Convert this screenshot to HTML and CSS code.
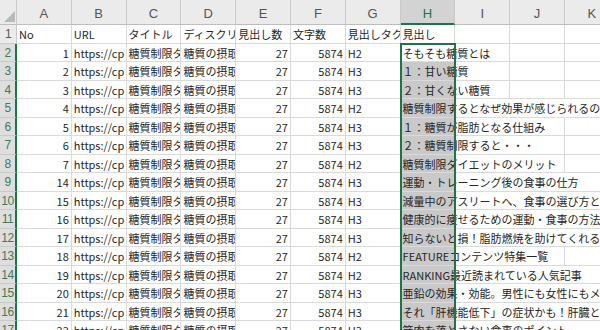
FILE: index.html
```html
<!DOCTYPE html>
<html lang="ja">
<head>
    <meta charset="utf-8">
    <link rel="stylesheet" href="styles.css">
</head>
<body>
    <div class="sheet">
        <div class="selection"></div>

        <div class="corner"><svg width="17" height="25" viewBox="0 0 17 25"><polygon points="4,22 15,22 15,11" fill="#b9b9b9"/></svg></div>
        <div class="col-head">A</div>
        <div class="col-head">B</div>
        <div class="col-head">C</div>
        <div class="col-head">D</div>
        <div class="col-head">E</div>
        <div class="col-head">F</div>
        <div class="col-head">G</div>
        <div class="col-head active">H</div>
        <div class="col-head">I</div>
        <div class="col-head">J</div>
        <div class="col-head">K</div>

        <div class="row-head">1</div>
        <div class="cell">No</div>
        <div class="cell">URL</div>
        <div class="cell">タイトル</div>
        <div class="cell">ディスクリ</div>
        <div class="cell">見出し数</div>
        <div class="cell">文字数</div>
        <div class="cell">見出しタク</div>
        <div class="cell">見出し</div>
        <div class="cell"></div>
        <div class="cell"></div>
        <div class="cell"></div>

        <div class="row-head sel">2</div>
        <div class="cell num">1</div>
        <div class="cell">https://cp</div>
        <div class="cell">糖質制限タ</div>
        <div class="cell">糖質の摂取</div>
        <div class="cell num">27</div>
        <div class="cell num">5874</div>
        <div class="cell">H2</div>
        <div class="cell span-2">そもそも糖質とは</div>
        <div class="cell"></div>
        <div class="cell"></div>

        <div class="row-head sel">3</div>
        <div class="cell num">2</div>
        <div class="cell">https://cp</div>
        <div class="cell">糖質制限タ</div>
        <div class="cell">糖質の摂取</div>
        <div class="cell num">27</div>
        <div class="cell num">5874</div>
        <div class="cell">H3</div>
        <div class="cell span-2 marked">１：甘い糖質</div>
        <div class="cell"></div>
        <div class="cell"></div>

        <div class="row-head sel">4</div>
        <div class="cell num">3</div>
        <div class="cell">https://cp</div>
        <div class="cell">糖質制限タ</div>
        <div class="cell">糖質の摂取</div>
        <div class="cell num">27</div>
        <div class="cell num">5874</div>
        <div class="cell">H3</div>
        <div class="cell span-2 marked">２：甘くない糖質</div>
        <div class="cell"></div>
        <div class="cell"></div>

        <div class="row-head sel">5</div>
        <div class="cell num">4</div>
        <div class="cell">https://cp</div>
        <div class="cell">糖質制限タ</div>
        <div class="cell">糖質の摂取</div>
        <div class="cell num">27</div>
        <div class="cell num">5874</div>
        <div class="cell">H2</div>
        <div class="cell span-4 marked">糖質制限するとなぜ効果が感じられるの</div>

        <div class="row-head sel">6</div>
        <div class="cell num">5</div>
        <div class="cell">https://cp</div>
        <div class="cell">糖質制限タ</div>
        <div class="cell">糖質の摂取</div>
        <div class="cell num">27</div>
        <div class="cell num">5874</div>
        <div class="cell">H3</div>
        <div class="cell span-3 marked">１：糖質が脂肪となる仕組み</div>
        <div class="cell"></div>

        <div class="row-head sel">7</div>
        <div class="cell num">6</div>
        <div class="cell">https://cp</div>
        <div class="cell">糖質制限タ</div>
        <div class="cell">糖質の摂取</div>
        <div class="cell num">27</div>
        <div class="cell num">5874</div>
        <div class="cell">H3</div>
        <div class="cell span-3 marked">２：糖質制限すると・・・</div>
        <div class="cell"></div>

        <div class="row-head sel">8</div>
        <div class="cell num">7</div>
        <div class="cell">https://cp</div>
        <div class="cell">糖質制限タ</div>
        <div class="cell">糖質の摂取</div>
        <div class="cell num">27</div>
        <div class="cell num">5874</div>
        <div class="cell">H2</div>
        <div class="cell span-3 marked">糖質制限ダイエットのメリット</div>
        <div class="cell"></div>

        <div class="row-head sel">9</div>
        <div class="cell num">14</div>
        <div class="cell">https://cp</div>
        <div class="cell">糖質制限タ</div>
        <div class="cell">糖質の摂取</div>
        <div class="cell num">27</div>
        <div class="cell num">5874</div>
        <div class="cell">H3</div>
        <div class="cell span-4 marked">運動・トレーニング後の食事の仕方</div>

        <div class="row-head sel">10</div>
        <div class="cell num">15</div>
        <div class="cell">https://cp</div>
        <div class="cell">糖質制限タ</div>
        <div class="cell">糖質の摂取</div>
        <div class="cell num">27</div>
        <div class="cell num">5874</div>
        <div class="cell">H3</div>
        <div class="cell span-4 marked">減量中のアスリートへ、食事の選び方と</div>

        <div class="row-head sel">11</div>
        <div class="cell num">16</div>
        <div class="cell">https://cp</div>
        <div class="cell">糖質制限タ</div>
        <div class="cell">糖質の摂取</div>
        <div class="cell num">27</div>
        <div class="cell num">5874</div>
        <div class="cell">H3</div>
        <div class="cell span-4 marked">健康的に痩せるための運動・食事の方法</div>

        <div class="row-head sel">12</div>
        <div class="cell num">17</div>
        <div class="cell">https://cp</div>
        <div class="cell">糖質制限タ</div>
        <div class="cell">糖質の摂取</div>
        <div class="cell num">27</div>
        <div class="cell num">5874</div>
        <div class="cell">H3</div>
        <div class="cell span-4 marked">知らないと損！脂肪燃焼を助けてくれる</div>

        <div class="row-head sel">13</div>
        <div class="cell num">18</div>
        <div class="cell">https://cp</div>
        <div class="cell">糖質制限タ</div>
        <div class="cell">糖質の摂取</div>
        <div class="cell num">27</div>
        <div class="cell num">5874</div>
        <div class="cell">H2</div>
        <div class="cell span-3 marked">FEATUREコンテンツ特集一覧</div>
        <div class="cell"></div>

        <div class="row-head sel">14</div>
        <div class="cell num">19</div>
        <div class="cell">https://cp</div>
        <div class="cell">糖質制限タ</div>
        <div class="cell">糖質の摂取</div>
        <div class="cell num">27</div>
        <div class="cell num">5874</div>
        <div class="cell">H2</div>
        <div class="cell span-4 marked">RANKING最近読まれている人気記事</div>

        <div class="row-head sel">15</div>
        <div class="cell num">20</div>
        <div class="cell">https://cp</div>
        <div class="cell">糖質制限タ</div>
        <div class="cell">糖質の摂取</div>
        <div class="cell num">27</div>
        <div class="cell num">5874</div>
        <div class="cell">H3</div>
        <div class="cell span-4 marked">亜鉛の効果・効能。男性にも女性にもメ</div>

        <div class="row-head sel">16</div>
        <div class="cell num">21</div>
        <div class="cell">https://cp</div>
        <div class="cell">糖質制限タ</div>
        <div class="cell">糖質の摂取</div>
        <div class="cell num">27</div>
        <div class="cell num">5874</div>
        <div class="cell">H3</div>
        <div class="cell span-4 marked">それ「肝機能低下」の症状かも！肝臓と</div>

        <div class="row-head sel">17</div>
        <div class="cell num">22</div>
        <div class="cell">https://cp</div>
        <div class="cell">糖質制限タ</div>
        <div class="cell">糖質の摂取</div>
        <div class="cell num">27</div>
        <div class="cell num">5874</div>
        <div class="cell">H3</div>
        <div class="cell span-4 marked">筋肉を落とさない食事のポイント</div>
    </div>
</body>
</html>
```

FILE: styles.css
```css
:root {
    --grid: #dadada;
    --head-bg: #ebebeb;
    --head-line: #c9c9c9;
    --head-text: #555555;
    --sel-head-bg: #d3d3d3;
    --green: #217346;
    --mark: #c9c9c9;
    --text: #262626;
}

body {
    margin: 0;
    background: #ffffff;
    overflow: hidden;
    font-family: "Noto Sans CJK JP", "Noto Sans", sans-serif;
    color: var(--text);
}

.sheet {
    position: relative;
    display: grid;
    grid-template-columns: 17px repeat(11, 54.8px);
    grid-template-rows: 25px repeat(17, 18.5px);
    width: 620px;
}

.corner {
    background: var(--head-bg);
    border-right: 1px solid var(--head-line);
    border-bottom: 1px solid #bdbdbd;
    box-sizing: border-box;
}

.corner svg {
    display: block;
}

.col-head {
    background: var(--head-bg);
    border-right: 1px solid var(--head-line);
    border-bottom: 1px solid #bdbdbd;
    box-sizing: border-box;
    color: var(--head-text);
    font-family: "Liberation Sans", sans-serif;
    font-size: 13px;
    line-height: 24px;
    padding-top: 2px;
    text-align: center;
}

.col-head.active {
    background: var(--sel-head-bg);
    color: var(--green);
    border-bottom: 2px solid var(--green);
}

.row-head {
    background: var(--head-bg);
    border-right: 1px solid var(--head-line);
    border-bottom: 1px solid var(--head-line);
    box-sizing: border-box;
    color: var(--head-text);
    font-family: "Liberation Sans", sans-serif;
    font-size: 12px;
    line-height: 18px;
    text-align: center;
    letter-spacing: -0.5px;
}

.row-head.sel {
    background: #dedede;
    color: #3f7a59;
    border-right: 2px solid var(--green);
}

.cell {
    border-right: 1px solid var(--grid);
    border-bottom: 1px solid var(--grid);
    box-sizing: border-box;
    padding: 0 1px 0 2px;
    font-size: 11px;
    line-height: 18px;
    white-space: nowrap;
    overflow: hidden;
}

.num {
    text-align: right;
    padding-right: 2px;
}

.span-2 { grid-column: span 2; }
.span-3 { grid-column: span 3; }
.span-4 { grid-column: span 4; }

.marked {
    background: linear-gradient(90deg, var(--mark) 54.8px, #ffffff 54.8px);
}

.selection {
    position: absolute;
    left: 399.6px;
    top: 42.5px;
    width: 56.8px;
    height: 320px;
    border: 2px solid var(--green);
    border-bottom: none;
    box-sizing: border-box;
    pointer-events: none;
    z-index: 2;
}
```
